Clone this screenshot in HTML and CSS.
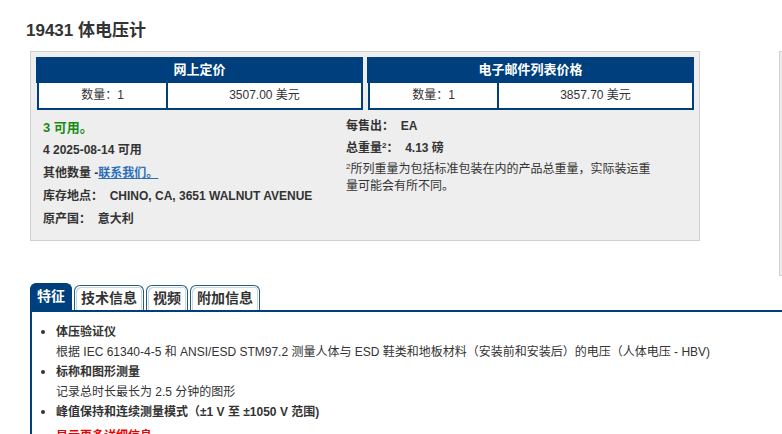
FILE: index.html
```html
<!DOCTYPE html>
<html lang="zh-CN">
<head>
<meta charset="utf-8">
<title>19431 体电压计</title>
<link rel="stylesheet" href="styles.css">
</head>
<body>
<div class="page">
  <h1 class="title">19431 体电压计</h1>
  <div class="top-row">
    <div class="buy-box">
      <div class="price-tables">
        <div class="price-table">
          <div class="price-head">网上定价</div>
          <div class="price-row">
            <div class="cell qty">数量：1</div>
            <div class="cell amt">3507.00 美元</div>
          </div>
        </div>
        <div class="price-table">
          <div class="price-head">电子邮件列表价格</div>
          <div class="price-row">
            <div class="cell qty">数量：1</div>
            <div class="cell amt">3857.70 美元</div>
          </div>
        </div>
      </div>
      <div class="details">
        <div class="col-left">
          <div class="line stock">3 可用。</div>
          <div class="line">4 2025-08-14 可用</div>
          <div class="line">其他数量 -<a class="contact" href="#">联系我们。</a></div>
          <div class="line">库存地点：&nbsp; CHINO, CA, 3651 WALNUT AVENUE</div>
          <div class="line">原产国：&nbsp; 意大利</div>
        </div>
        <div class="col-right">
          <div class="line r1">每售出：&nbsp; EA</div>
          <div class="line r2">总重量<sup>2</sup>：&nbsp; 4.13 磅</div>
          <div class="note"><sup>2</sup>所列重量为包括标准包装在内的产品总重量，实际装运重量可能会有所不同。</div>
        </div>
      </div>
    </div>
    <div class="side-box"></div>
  </div>

  <div class="tabs">
    <div class="tab active">特征</div>
    <div class="tab">技术信息</div>
    <div class="tab">视频</div>
    <div class="tab">附加信息</div>
  </div>
  <div class="tab-panel">
    <ul class="features">
      <li><b>体压验证仪</b><span class="desc">根据 IEC 61340-4-5 和 ANSI/ESD STM97.2 测量人体与 ESD 鞋类和地板材料（安装前和安装后）的电压（人体电压 - HBV)</span></li>
      <li><b>标称和图形测量</b><span class="desc">记录总时长最长为 2.5 分钟的图形</span></li>
      <li><b>峰值保持和连续测量模式（±1 V 至 ±1050 V 范围)</b></li>
    </ul>
    <div class="more">显示更多详细信息</div>
  </div>
</div>
</body>
</html>
```

FILE: styles.css
```css
html { overflow: hidden; }
body {
  margin: 0;
  font-family: "Liberation Sans", Arial, "Noto Sans CJK SC", sans-serif;
  color: #333;
  font-size: 12px;
}
.page {
  width: 1000px;
  padding-top: 20px;
}
.title {
  margin: 0 0 0 26px;
  font-size: 17px;
  line-height: 22px;
  font-weight: bold;
  color: #333;
}
.top-row {
  display: flex;
  align-items: flex-start;
  margin: 9px 0 0 30px;
}
.buy-box {
  border: 1px solid #cfcfcf;
  background: #eeeeee;
  padding: 5px 4px 0 5px;
  width: 659px;
  height: 183px;
}
.side-box {
  margin-left: 79px;
  width: 200px;
  height: 223px;
  border: 1px solid #cfcfcf;
  background: #eeeeee;
}
.price-tables {
  display: flex;
  gap: 4px;
}
.price-table {
  width: 327px;
}
.price-head {
  height: 26px;
  background: #003f7d;
  color: #fff;
  font-weight: bold;
  font-size: 13px;
  line-height: 26px;
  text-align: center;
}
.price-row {
  display: flex;
  height: 27px;
  margin-left: 1px;
  border: 2px solid #003f7d;
  border-top: 0;
  background: #fff;
  box-sizing: border-box;
}
.cell {
  line-height: 25px;
  text-align: center;
  font-size: 12px;
}
.qty {
  width: 127px;
  border-right: 2px solid #003f7d;
}
.amt { flex: 1; }
.details {
  display: flex;
  padding: 6px 0 0 7px;
}
.col-left { width: 303px; }
.col-right { width: 310px; }
.line {
  font-weight: bold;
  line-height: 23px;
  font-size: 12px;
}
.stock {
  color: #1a8a17;
  font-size: 13px;
}
.contact {
  color: #2a6fb8;
  font-weight: bold;
  text-decoration: underline;
}
.r1 { line-height: 20px; }
.r2 { line-height: 24px; }
sup { font-size: 8px; line-height: 0; vertical-align: 4px; }
.note {
  font-size: 12px;
  line-height: 17px;
  margin-top: 1px;
  width: 310px;
}
.tabs {
  display: flex;
  gap: 2px;
  margin: 8px 0 0 30px;
  height: 26px;
  align-items: flex-end;
}
.tab {
  height: 24px;
  line-height: 25px;
  padding: 0 6px;
  border: 1px solid #1f5f80;
  border-bottom: 0;
  border-radius: 6px 6px 0 0;
  font-weight: bold;
  font-size: 14px;
  color: #333;
  background: #fff;
  box-shadow: inset 1px 1px 0 #fff, inset -1px 0 0 #fff, inset 2px 2px 0 #c9d6df, inset -2px 0 0 #c9d6df;
}
.tab.active {
  height: 26px;
  background: #003f7d;
  border-color: #003f7d;
  color: #fff;
  box-shadow: none;
}
.tab-panel {
  margin-left: 30px;
  border-top: 2px solid #003f7d;
  border-left: 2px solid #003f7d;
  padding: 10px 0 0 0;
  height: 200px;
}
.features {
  margin: 0;
  padding: 0 0 0 24px;
  list-style: disc;
}
.features li {
  line-height: 20px;
}
.features li::marker { font-size: 13px; line-height: 20px; }
.features b { font-weight: bold; display: block; height: 20px; }
.desc { display: block; font-weight: normal; height: 20px; }
.more {
  margin: 4px 0 0 24px;
  color: #e00;
  font-weight: bold;
  line-height: 20px;
}
```
